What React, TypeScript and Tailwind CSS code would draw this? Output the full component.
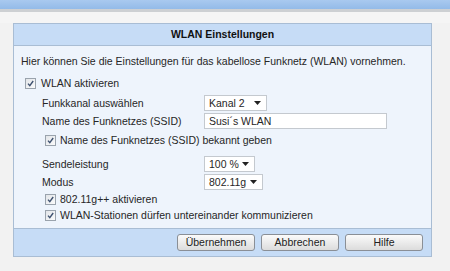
import React from "react";

const font = { fontFamily: '"Liberation Sans", Arial, sans-serif' };

function Check() {
  return (
    <span className="flex h-[11px] w-[11px] shrink-0 items-center justify-center border border-[#9aa3ad] bg-gradient-to-br from-[#e2e5e9] to-[#fbfbfb]">
      <svg width="9" height="9" viewBox="0 0 9 9">
        <path d="M2 4.6 L3.8 6.6 L7.2 2" fill="none" stroke="#3f5270" strokeWidth="1.4" />
      </svg>
    </span>
  );
}

function Select({ label, w }: { label: string; w: string }) {
  return (
    <div className={`flex h-[16px] items-center justify-between border border-[#c4c9cf] bg-white pl-[4px] pr-[5px] ${w}`}>
      <span>{label}</span>
      <svg width="7" height="4" viewBox="0 0 7 4">
        <path d="M0 0 H7 L3.5 4 Z" fill="#222" />
      </svg>
    </div>
  );
}

function Btn({ children }: { children: React.ReactNode }) {
  return (
    <div className="flex h-[17px] w-[78px] items-center justify-center rounded-[3px] border border-[#8a8f96] bg-gradient-to-b from-[#fbfbfb] to-[#dcdcdc] text-[10.5px] text-[#222]">
      {children}
    </div>
  );
}

export default function App() {
  return (
    <div className="h-[271px] w-[450px] overflow-hidden bg-[#f2f2f2] text-[10.5px] leading-none text-[#262626]" style={font}>
      <div className="h-[9px] bg-gradient-to-b from-[#a9c9ef] to-[#93bbe8]" />
      <div className="h-[3px] bg-[#cdd0d3]" />
      <div className="h-[11px] bg-[#f5f5f5]" />
      <div className="ml-[13px] w-[419px] border border-[#a9bdd4]">
        <div className="flex h-[22px] items-center justify-center border-b border-[#a9bdd4] bg-[#c6dcf6] font-bold text-[#111]">
          WLAN Einstellungen
        </div>
        <div className="flex flex-col bg-[#eef4fc] pb-[6px] pt-[8px]">
          <div className="flex h-[14px] items-center pl-[7px]">
            Hier können Sie die Einstellungen für das kabellose Funknetz (WLAN) vornehmen.
          </div>
          <div className="mt-[8px] flex h-[14px] items-center gap-[5px] pl-[11px]">
            <Check />
            <span>WLAN aktivieren</span>
          </div>
          <div className="mt-[4px] flex h-[18px] items-center pl-[28px]">
            <span className="w-[162px]">Funkkanal auswählen</span>
            <Select label="Kanal 2" w="w-[63px]" />
          </div>
          <div className="flex h-[18px] items-center pl-[28px]">
            <span className="w-[162px]">Name des Funknetzes (SSID)</span>
            <div className="flex h-[16px] w-[183px] items-center border border-[#c4c9cf] bg-white pl-[4px]">Susi´s WLAN</div>
          </div>
          <div className="mt-[3px] flex h-[14px] items-center gap-[4px] pl-[31px]">
            <Check />
            <span>Name des Funknetzes (SSID) bekannt geben</span>
          </div>
          <div className="mt-[8px] flex h-[18px] items-center pl-[28px]">
            <span className="w-[162px]">Sendeleistung</span>
            <Select label="100 %" w="w-[51px]" />
          </div>
          <div className="flex h-[18px] items-center pl-[28px]">
            <span className="w-[162px]">Modus</span>
            <Select label="802.11g" w="w-[59px]" />
          </div>
          <div className="mt-[1px] flex h-[14px] items-center gap-[4px] pl-[31px]">
            <Check />
            <span>802.11g++ aktivieren</span>
          </div>
          <div className="mt-[2px] flex h-[14px] items-center gap-[4px] pl-[31px]">
            <Check />
            <span>WLAN-Stationen dürfen untereinander kommunizieren</span>
          </div>
        </div>
        <div className="flex h-[28px] items-center justify-end gap-[6px] border-t border-[#a9bdd4] bg-[#c6dcf6] pr-[8px]">
          <Btn>Übernehmen</Btn>
          <Btn>Abbrechen</Btn>
          <Btn>Hilfe</Btn>
        </div>
      </div>
    </div>
  );
}
